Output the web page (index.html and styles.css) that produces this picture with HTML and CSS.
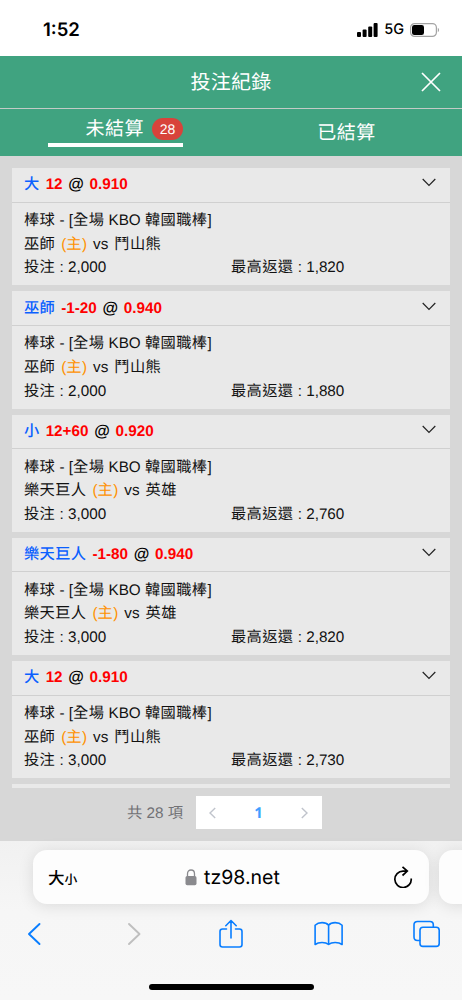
FILE: index.html
```html
<!DOCTYPE html>
<html lang="zh-Hant">
<head>
<meta charset="utf-8">
<meta name="viewport" content="width=device-width, initial-scale=1">
<title>投注紀錄</title>
<link rel="stylesheet" href="styles.css">
</head>
<body>
<div class="phone">
  <div class="status">
    <span class="time">1:52</span>
    <span class="signals">
      <svg class="bars" width="21" height="14" viewBox="0 0 21 14"><rect x="0" y="9" width="4" height="5" rx="1"/><rect x="5.6" y="6.5" width="4" height="7.5" rx="1"/><rect x="11.2" y="3.5" width="4" height="10.5" rx="1"/><rect x="16.6" y="0" width="4" height="14" rx="1"/></svg>
      <span class="network">5G</span>
      <svg class="battery" width="30" height="14" viewBox="0 0 30 14"><rect x=".6" y=".6" width="25.8" height="12.8" rx="4" fill="none" stroke="#a4a4a4" stroke-width="1.2"/><rect x="2" y="2" width="12" height="10" rx="2.3"/><path d="M27.8 4.8v4.4c1.8-.7 1.8-3.7 0-4.4z" fill="#a4a4a4"/></svg>
    </span>
  </div>

  <header class="title-bar">
    <h1>投注紀錄</h1>
    <svg class="close" width="20" height="20" viewBox="0 0 20 20"><path d="M1 1l18 18M19 1L1 19"/></svg>
  </header>

  <nav class="tabs">
    <div class="tab"><div class="tab-active"><span>未結算</span><span class="badge">28</span></div></div>
    <div class="tab"><span class="tab-idle">已結算</span></div>
  </nav>

  <main class="list">
    <section class="card">
      <div class="card-head"><b class="pick">大</b><b class="odds">12</b><b class="at">@</b><b class="odds">0.910</b><svg class="chevron" width="14" height="9" viewBox="0 0 14 9"><path d="M.7 1L7 7.3 13.3 1"/></svg></div>
      <div class="card-body">
        <p><i>棒球</i> - [<i>全場</i> KBO <i>韓國職棒</i>]</p>
        <p class="teams"><i>巫師</i><span class="home">(<i>主</i>)</span><span>vs</span><i>鬥山熊</i></p>
        <p class="money"><span><i>投注</i> : 2,000</span><span><i>最高返還</i> : 1,820</span></p>
      </div>
    </section>
    <section class="card">
      <div class="card-head"><b class="pick">巫師</b><b class="odds">-1-20</b><b class="at">@</b><b class="odds">0.940</b><svg class="chevron" width="14" height="9" viewBox="0 0 14 9"><path d="M.7 1L7 7.3 13.3 1"/></svg></div>
      <div class="card-body">
        <p><i>棒球</i> - [<i>全場</i> KBO <i>韓國職棒</i>]</p>
        <p class="teams"><i>巫師</i><span class="home">(<i>主</i>)</span><span>vs</span><i>鬥山熊</i></p>
        <p class="money"><span><i>投注</i> : 2,000</span><span><i>最高返還</i> : 1,880</span></p>
      </div>
    </section>
    <section class="card">
      <div class="card-head"><b class="pick">小</b><b class="odds">12+60</b><b class="at">@</b><b class="odds">0.920</b><svg class="chevron" width="14" height="9" viewBox="0 0 14 9"><path d="M.7 1L7 7.3 13.3 1"/></svg></div>
      <div class="card-body">
        <p><i>棒球</i> - [<i>全場</i> KBO <i>韓國職棒</i>]</p>
        <p class="teams"><i>樂天巨人</i><span class="home">(<i>主</i>)</span><span>vs</span><i>英雄</i></p>
        <p class="money"><span><i>投注</i> : 3,000</span><span><i>最高返還</i> : 2,760</span></p>
      </div>
    </section>
    <section class="card">
      <div class="card-head"><b class="pick">樂天巨人</b><b class="odds">-1-80</b><b class="at">@</b><b class="odds">0.940</b><svg class="chevron" width="14" height="9" viewBox="0 0 14 9"><path d="M.7 1L7 7.3 13.3 1"/></svg></div>
      <div class="card-body">
        <p><i>棒球</i> - [<i>全場</i> KBO <i>韓國職棒</i>]</p>
        <p class="teams"><i>樂天巨人</i><span class="home">(<i>主</i>)</span><span>vs</span><i>英雄</i></p>
        <p class="money"><span><i>投注</i> : 3,000</span><span><i>最高返還</i> : 2,820</span></p>
      </div>
    </section>
    <section class="card">
      <div class="card-head"><b class="pick">大</b><b class="odds">12</b><b class="at">@</b><b class="odds">0.910</b><svg class="chevron" width="14" height="9" viewBox="0 0 14 9"><path d="M.7 1L7 7.3 13.3 1"/></svg></div>
      <div class="card-body">
        <p><i>棒球</i> - [<i>全場</i> KBO <i>韓國職棒</i>]</p>
        <p class="teams"><i>巫師</i><span class="home">(<i>主</i>)</span><span>vs</span><i>鬥山熊</i></p>
        <p class="money"><span><i>投注</i> : 3,000</span><span><i>最高返還</i> : 2,730</span></p>
      </div>
    </section>
    <section class="card card-next"></section>
  </main>

  <div class="pager">
    <span class="total">共 28 項</span>
    <div class="pages">
      <svg width="7" height="12" viewBox="0 0 7 12"><path d="M6.2 1L1 6l5.2 5"/></svg>
      <b>1</b>
      <svg width="7" height="12" viewBox="0 0 7 12"><path d="M.8 1L6 6 .8 11"/></svg>
    </div>
  </div>

  <footer class="browser">
    <div class="address-row">
      <div class="address">
        <span class="text-size">大<small>小</small></span>
        <span class="site">
          <svg width="12" height="17" viewBox="0 0 12 17"><rect x=".5" y="7" width="11" height="9.3" rx="1.7" fill="#8a8a8e"/><path d="M2.5 7.5V4.7C2.5 2.5 4 1 6 1s3.500 1.500 3.500 3.700v2.800" fill="none" stroke="#8a8a8e" stroke-width="1.300"/></svg>
          <span>tz98.net</span>
        </span>
        <svg class="reload" width="20" height="22" viewBox="0 0 20 22"><path d="M14.300 5.100H10A8.200 8.200 0 1 0 18.200 12.500M9.500 .8l4.800 4.300-4.800 4.400"/></svg>
      </div>
      <div class="next-tab"></div>
    </div>
    <div class="toolbar">
      <svg width="30" height="24" viewBox="-7 0 30 24"><path d="M12.500 2L2 12l10.500 10"/></svg>
      <svg class="disabled" width="30" height="24" viewBox="-9.500 0 30 24"><path d="M1.500 2L12 12 1.500 22"/></svg>
      <svg class="thin" width="30" height="30" viewBox="-2 0 30 30"><path d="M8.500 10H4.500Q2 10 2 12.500V25.500Q2 28 4.500 28H21.500Q24 28 24 25.500V12.500Q24 10 21.500 10H17.500M13 19V1.500M7.800 6.700L13 1.500l5.200 5.200"/></svg>
      <svg class="thin" width="30" height="26" viewBox="-.6 0 30 26"><path d="M15 4.200C12 .8 5 .8 1.500 4.300V23.500C5 20.800 12 20.800 15 23.500 18 20.800 25 20.800 28.500 23.500V4.300C25 .8 18 .8 15 4.200V23.500"/></svg>
      <svg class="thin" width="30" height="28" viewBox="-1.500 0 30 28"><path d="M7.200 20.500H5Q1.500 20.500 1.500 17V4.800Q1.500 1.500 5 1.500H17.500Q20.800 1.500 20.800 4.800V7"/><rect x="7.500" y="7.200" width="19.200" height="19.200" rx="3"/></svg>
    </div>
    <div class="home-bar"></div>
  </footer>
</div>
</body>
</html>
```
FILE: styles.css
```css
* { box-sizing: border-box; }

body {
  margin: 0;
  background: #fff;
  color: #111;
  font-family: "Liberation Sans", "Noto Sans CJK TC", sans-serif;
  text-rendering: geometricPrecision;
}

svg { flex: none; }
h1, p { margin: 0; }
i { font-style: normal; letter-spacing: 0.360px; }

.phone {
  width: 462px;
  height: 1000px;
  overflow: hidden;
  display: flex;
  flex-direction: column;
}

.status {
  height: 55.500px;
  flex: none;
  display: flex;
  align-items: center;
  justify-content: space-between;
  padding: 4px 22px 0 43px;
  color: #000;
}
.time {
  font: 600 18.500px/24px Inter, sans-serif;
  letter-spacing: 0;
}
.signals { display: flex; align-items: center; gap: 6px; }
.network {
  font: 500 14.500px/20px Inter, sans-serif;
  padding-top: 1px;
}

.title-bar {
  height: 53.500px;
  flex: none;
  display: grid;
  grid-template-columns: 1fr auto 1fr;
  align-items: center;
  padding: 0 21px;
  background: #40a380;
  border-bottom: 1px solid #c3cbc7;
}
.title-bar h1 {
  grid-column: 2;
  padding-top: 2px;
  color: #fff;
  font-size: 20px;
  line-height: 30px;
  font-weight: 400;
  letter-spacing: 0.300px;
}
.close {
  justify-self: end;
  fill: none;
  stroke: #fff;
  stroke-width: 1.700;
}

.tabs {
  height: 47px;
  flex: none;
  display: grid;
  grid-template-columns: 1fr 1fr;
  background: #40a380;
  color: #fff;
  font-size: 19px;
  letter-spacing: 0.500px;
}
.tab { display: flex; justify-content: center; align-items: flex-start; }
.tab-active {
  width: 135px;
  height: 38px;
  display: flex;
  justify-content: flex-end;
  align-items: center;
  gap: 8px;
  padding-top: 6px;
  border-bottom: 4px solid #fff;
  line-height: 30px;
}
.badge {
  width: 31px;
  height: 22px;
  border-radius: 11px;
  background: #d8433b;
  font-size: 14px;
  line-height: 22px;
  text-align: center;
  letter-spacing: 0;
}
.tab-active span:first-child { padding-top: 2px; }
.tab-idle { line-height: 28px; padding-top: 11px; }

.list {
  height: 632px;
  flex: none;
  padding: 12px 12px 0;
  background: #d7d7d7;
  overflow: hidden;
}
.card {
  height: 117.250px;
  margin-bottom: 6px;
  background: #e9e9e9;
  font-size: 15.250px;
}
.card-next { height: 4px; margin: 0; }
.card-head {
  height: 34.500px;
  display: flex;
  align-items: center;
  gap: 6px;
  padding: 0 14px 1px 12px;
  border-bottom: 1.500px solid #d0d0d0;
  color: #000;
  line-height: 20px;
}
.card-head b { padding-top: 2px; }
.pick { color: #0a60ff; font-weight: 500; letter-spacing: 0.360px; }
.odds { color: #f00; }
.at { font-size: 16px; margin-left: -0.300px; margin-right: -0.300px; }
.chevron {
  margin: -3px 0 0 auto;
  fill: none;
  stroke: #222;
  stroke-width: 1.200;
}
.card-body { padding: 6.500px 12px 0; line-height: 23.700px; }
.card-body p { height: 23.700px; white-space: nowrap; }
.teams { display: flex; gap: 6px; }
.home { color: #ff9100; }
.money { display: grid; grid-template-columns: 1fr 1fr; }

.pager {
  height: 53px;
  flex: none;
  display: flex;
  align-items: flex-start;
  justify-content: space-between;
  padding: 8px 140px 0 127px;
  background: #d7d7d7;
}
.total { color: #717175; font-size: 15.300px; line-height: 33px; padding-top: 1px; }
.pages {
  width: 126px;
  height: 33px;
  display: flex;
  align-items: center;
  justify-content: space-between;
  padding: 0 14px 0 13px;
  background: #fff;
}
.pages b {
  color: #409eff;
  font: 700 15px/20px "Noto Sans", sans-serif;
}
.pages svg { fill: none; stroke: #c0c4cc; stroke-width: 1.400; }

.browser {
  flex: 1;
  display: flex;
  flex-direction: column;
  background: linear-gradient(#f1f1f1, #f6f6f6 70px, #f7f7f7);
}
.address-row { display: flex; gap: 10px; padding: 9px 0 0 33px; }
.address, .next-tab {
  height: 54px;
  border-radius: 14px;
  background: #fdfdfd;
  box-shadow: 0 2px 16px rgba(0, 0, 0, 0.110);
}
.address {
  width: 396px;
  flex: none;
  display: grid;
  grid-template-columns: 1fr auto 1fr;
  align-items: center;
  padding: 0 16px 0 15px;
  color: #000;
}
.next-tab { width: 40px; flex: none; }
.text-size { font: 500 16.500px/24px "Noto Sans CJK TC", sans-serif; padding-top: 1px; }
.text-size small { font-size: 12.800px; }
.site {
  display: flex;
  align-items: center;
  gap: 7px;
  padding: 0 0 0 4px;
  font: 400 19.500px/26px Inter, sans-serif;
}
.reload {
  justify-self: end;
  fill: none;
  stroke: #000;
  stroke-width: 1.700;
}
.toolbar {
  height: 56px;
  display: flex;
  align-items: center;
  justify-content: space-between;
  padding: 3px 21px 0 20px;
}
.toolbar svg {
  fill: none;
  stroke: #087dff;
  stroke-width: 1.900;
  stroke-linecap: round;
  stroke-linejoin: round;
}
.toolbar .thin { stroke-width: 1.600; }
.toolbar .disabled { stroke: #bfbfbf; }
.home-bar {
  width: 165px;
  height: 6px;
  margin: 24px auto 0;
  border-radius: 3px;
  background: #000;
}
```
